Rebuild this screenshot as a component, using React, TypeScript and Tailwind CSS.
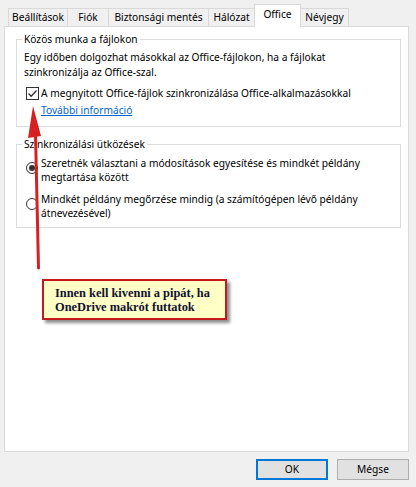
import React from "react";

const ui = { fontFamily: '"Noto Sans", "Open Sans", sans-serif' };

function Tab({ label, w, selected }: { label: string; w: number; selected?: boolean }) {
  if (selected) {
    return (
      <div
        className="relative z-10 -mb-px -ml-px flex h-[23px] items-start justify-center whitespace-nowrap border border-b-0 border-[#d9d9d9] bg-white pt-[2px] text-[10.2px] leading-[15px] text-black"
        style={{ width: w }}
      >
        {label}
      </div>
    );
  }
  return (
    <div
      className="-ml-px flex h-[18px] items-center justify-center whitespace-nowrap border border-b-0 border-[#d9d9d9] bg-[#f0f0f0] text-[10.2px] leading-[15px] text-black"
      style={{ width: w }}
    >
      {label}
    </div>
  );
}

const T = "text-[10.2px]";

export default function App() {
  return (
    <div className="relative h-[487px] w-[416px] overflow-hidden bg-[#f0f0f0] text-black" style={ui}>
      {/* tabs */}
      <div className="flex h-[26px] items-end pl-[9px]">
        <Tab label="Beállítások" w={60} />
        <Tab label="Fiók" w={42} />
        <Tab label="Biztonsági mentés" w={101} />
        <Tab label="Hálózat" w={47} />
        <Tab label="Office" w={47} selected />
        <Tab label="Névjegy" w={49} />
      </div>

      {/* panel */}
      <div className="ml-[4px] h-[426px] w-[405px] border border-[#d9d9d9] bg-white pt-[5px]">
        <fieldset className="ml-[11px] w-[385px] border border-[#dcdcdc] pb-[8px] pl-[7px] pr-[7px] pt-[3px]">
          <legend className={`-ml-[2px] whitespace-nowrap px-[2px] ${T} leading-[15px]`}>Közös munka a fájlokon</legend>
          <div className={`whitespace-nowrap ${T} leading-[15px]`}>
            Egy időben dolgozhat másokkal az Office-fájlokon, ha a fájlokat
            <br />
            szinkronizálja az Office-szal.
          </div>
          <div className="mt-[6px] flex items-center">
            <div className="ml-[2px] flex h-[13px] w-[13px] items-center justify-center border border-[#333333] bg-white">
              <svg width="11" height="11" viewBox="0 0 11 11">
                <path d="M1.5 5.5 L4.2 8.2 L9.5 2.5" fill="none" stroke="#333333" strokeWidth="1.3" />
              </svg>
            </div>
            <span className={`ml-[2px] whitespace-nowrap ${T} leading-[15px]`}>
              A megnyitott Office-fájlok szinkronizálása Office-alkalmazásokkal
            </span>
          </div>
          <div className={`mt-[2px] whitespace-nowrap pl-[17px] ${T} leading-[15px] text-[#0066cc] underline`}>
            További információ
          </div>
        </fieldset>

        <fieldset className="ml-[11px] mt-[10px] w-[385px] border border-[#dcdcdc] pb-[7px] pl-[7px] pr-[7px] pt-[4px]">
          <legend className={`-ml-[2px] whitespace-nowrap px-[2px] ${T} leading-[15px]`}>Szinkronizálási ütközések</legend>
          <div className="flex items-start">
            <div className="ml-[2px] mt-[6px] flex h-[12px] w-[12px] shrink-0 items-center justify-center rounded-full border border-[#333333] bg-white">
              <div className="h-[6px] w-[6px] rounded-full bg-[#333333]" />
            </div>
            <div className={`ml-[3px] whitespace-nowrap ${T} leading-[14px]`}>
              Szeretnék választani a módosítások egyesítése és mindkét példány
              <br />
              megtartása között
            </div>
          </div>
          <div className="mt-[8px] flex items-start">
            <div className="ml-[2px] mt-[6px] h-[12px] w-[12px] shrink-0 rounded-full border border-[#333333] bg-white" />
            <div className={`ml-[3px] whitespace-nowrap ${T} leading-[14px]`}>
              Mindkét példány megőrzése mindig (a számítógépen lévő példány
              <br />
              átnevezésével)
            </div>
          </div>
        </fieldset>
      </div>

      {/* buttons */}
      <div className="mt-[7px] flex justify-end gap-[9px] pr-[7px]">
        <button className={`h-[21px] w-[72px] border-2 border-[#0078d7] bg-[#e1e1e1] ${T} leading-[15px]`}>OK</button>
        <button className={`h-[21px] w-[72px] border border-[#adadad] bg-[#e1e1e1] ${T} leading-[15px]`}>Mégse</button>
      </div>

      {/* annotation arrow */}
      <svg className="pointer-events-none absolute left-0 top-0" width="416" height="487">
        <line x1="35.5" y1="134" x2="38.5" y2="268" stroke="#d42222" strokeWidth="3" strokeLinecap="round" />
        <polygon points="33,106 28,138 41,136" fill="#d42222" />
      </svg>

      {/* callout */}
      <div
        className="absolute left-[42px] top-[279px] h-[41px] w-[185px] whitespace-nowrap border-2 border-[#c41a1a] bg-[#ffffc6] pl-[11px] pt-[5px] text-[12.4px] font-bold leading-[14px] text-[#111133] shadow-[3px_3px_3px_rgba(0,0,0,0.45)]"
        style={{ fontFamily: '"Liberation Serif", "Times New Roman", serif' }}
      >
        Innen kell kivenni a pipát, ha
        <br />
        OneDrive makrót futtatok
      </div>
    </div>
  );
}
